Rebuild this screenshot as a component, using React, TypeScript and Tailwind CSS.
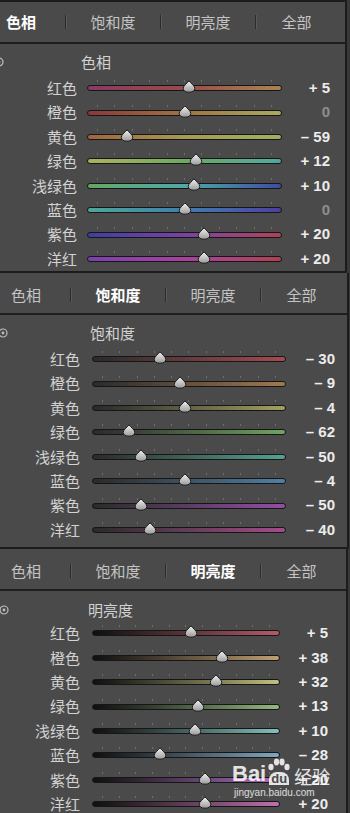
import React from "react";

type Row = { label: string; value: number; track: string };

interface PanelProps {
  active: number;
  title: string;
  rows: Row[];
  panelClass: string;
  tabsClass: string;
  headerClass: string;
  iconClass: string;
  labelClass: string;
  trackClass: string;
  valueClass: string;
}

const tabs = ["色相", "饱和度", "明亮度", "全部"];

const Thumb = () => (
  <svg width="14" height="13" viewBox="0 0 14 13" className="block">
    <defs>
      <linearGradient id="thumbFill" x1="0" y1="0" x2="0" y2="1">
        <stop offset="0" stopColor="#f2f2f2" />
        <stop offset="1" stopColor="#9a9a9a" />
      </linearGradient>
    </defs>
    <path
      d="M7 0.8 C8 2.6 12.8 5.6 12.8 8.4 C12.8 10.8 10.6 12.2 7 12.2 C3.4 12.2 1.2 10.8 1.2 8.4 C1.2 5.6 6 2.6 7 0.8Z"
      fill="url(#thumbFill)"
      stroke="#1e1e1e"
      strokeWidth="1"
    />
  </svg>
);

const TargetIcon = ({ className }: { className: string }) => (
  <svg width="10" height="10" viewBox="0 0 10 10" className={className}>
    <circle cx="5" cy="5" r="4" fill="none" stroke="#bdbdbd" strokeWidth="1.2" />
    <circle cx="5" cy="5" r="1.4" fill="#bdbdbd" />
  </svg>
);

const formatValue = (v: number) => {
  if (v === 0) return "0";
  return `${v > 0 ? "+" : "–"} ${Math.abs(v)}`;
};

const Slider = ({ row, trackClass }: { row: Row; trackClass: string }) => {
  const pct = 50 + row.value / 2;
  return (
    <div className={`relative ${trackClass}`}>
      <div className="absolute -top-[5px] left-0 right-0 flex justify-between px-[10px]">
        {Array.from({ length: 11 }).map((_, i) => (
          <span key={i} className="block w-px h-[2px] bg-[#6e6e6e]" />
        ))}
      </div>
      <div
        className={`h-[6px] rounded-full border border-[#161616] ${row.track}`}
      />
      <div
        className="absolute -top-[5px] -translate-x-1/2"
        style={{ left: `${pct}%` }}
      >
        <Thumb />
      </div>
    </div>
  );
};

const Panel = ({
  active,
  title,
  rows,
  panelClass,
  tabsClass,
  headerClass,
  iconClass,
  labelClass,
  trackClass,
  valueClass,
}: PanelProps) => {
  return (
    <section className={`bg-[#4a4a4a] border-r-2 border-[#1c1c1c] ${panelClass}`}>
      <div
        className={`flex items-center border-b-2 border-[#1e1e1e] text-[15px] ${tabsClass}`}
      >
        {tabs.map((t, i) => (
          <React.Fragment key={t}>
            {i > 0 && (
              <span className="block w-px h-[14px] bg-[#2c2c2c] shadow-[1px_0_0_#5a5a5a]" />
            )}
            <span
              className={`text-center ${
                i === 0
                  ? "w-[32px] mr-[28px]"
                  : i === 3
                    ? "w-[31px] ml-[25px]"
                    : "w-[46px] mx-[24px]"
              } ${
                i === active
                  ? "text-white font-bold"
                  : "text-[#c4c4c4]"
              }`}
            >
              {t}
            </span>
          </React.Fragment>
        ))}
      </div>
      <div className={`flex items-center text-[15px] text-[#d2d2d2] ${headerClass}`}>
        <TargetIcon className={iconClass} />
        <span>{title}</span>
      </div>
      {rows.map((r) => (
        <div key={r.label} className="flex items-center h-[24.4px]">
          <span className={`text-right text-[15px] text-[#d2d2d2] ${labelClass}`}>
            {r.label}
          </span>
          <Slider row={r} trackClass={trackClass} />
          <span
            className={`text-right text-[15px] font-semibold font-['Liberation_Sans',sans-serif] ${valueClass} ${
              r.value === 0 ? "text-[#8e8e8e]" : "text-[#ececec]"
            }`}
          >
            {formatValue(r.value)}
          </span>
        </div>
      ))}
    </section>
  );
};

const hueRows: Row[] = [
  { label: "红色", value: 5, track: "bg-linear-to-r from-[#8a3a62] via-[#9a4a48] to-[#a88452]" },
  { label: "橙色", value: 0, track: "bg-linear-to-r from-[#8a3838] via-[#a07244] to-[#a8aa60]" },
  { label: "黄色", value: -59, track: "bg-linear-to-r from-[#a0643e] via-[#a69a54] to-[#9eb260]" },
  { label: "绿色", value: 12, track: "bg-linear-to-r from-[#aab25e] via-[#6eaa5e] to-[#4ea8a0]" },
  { label: "浅绿色", value: 10, track: "bg-linear-to-r from-[#62a862] via-[#4ea8a8] to-[#3e4c9e]" },
  { label: "蓝色", value: 0, track: "bg-linear-to-r from-[#4ea896] via-[#407eae] to-[#4a3ea0]" },
  { label: "紫色", value: 20, track: "bg-linear-to-r from-[#3e3ea2] via-[#7a40a4] to-[#b04058]" },
  { label: "洋红", value: 20, track: "bg-linear-to-r from-[#7a40b0] via-[#a8409e] to-[#b04052]" },
];

const satRows: Row[] = [
  { label: "红色", value: -30, track: "bg-linear-to-r from-[#2a2a2a] to-[#a44a52]" },
  { label: "橙色", value: -9, track: "bg-linear-to-r from-[#2a2a2a] to-[#a4784e]" },
  { label: "黄色", value: -4, track: "bg-linear-to-r from-[#2a2a2a] to-[#a4a05e]" },
  { label: "绿色", value: -62, track: "bg-linear-to-r from-[#2a2a2a] to-[#70a45e]" },
  { label: "浅绿色", value: -50, track: "bg-linear-to-r from-[#2a2a2a] to-[#52a492]" },
  { label: "蓝色", value: -4, track: "bg-linear-to-r from-[#2a2a2a] to-[#4e80a6]" },
  { label: "紫色", value: -50, track: "bg-linear-to-r from-[#2a2a2a] to-[#944ca8]" },
  { label: "洋红", value: -40, track: "bg-linear-to-r from-[#2a2a2a] to-[#a44c8a]" },
];

const lumRows: Row[] = [
  { label: "红色", value: 5, track: "bg-linear-to-r from-[#101010] to-[#b45a6a]" },
  { label: "橙色", value: 38, track: "bg-linear-to-r from-[#101010] to-[#c0a072]" },
  { label: "黄色", value: 32, track: "bg-linear-to-r from-[#101010] to-[#c2c07e]" },
  { label: "绿色", value: 13, track: "bg-linear-to-r from-[#101010] to-[#92ba7e]" },
  { label: "浅绿色", value: 10, track: "bg-linear-to-r from-[#101010] to-[#82c0bc]" },
  { label: "蓝色", value: -28, track: "bg-linear-to-r from-[#101010] to-[#80a8c2]" },
  { label: "紫色", value: 20, track: "bg-linear-to-r from-[#101010] to-[#b070c2]" },
  { label: "洋红", value: 20, track: "bg-linear-to-r from-[#101010] to-[#c070ae]" },
];

const Watermark = () => (
  <div className="absolute left-[232px] top-[758px] text-white/85 pointer-events-none">
    <div className="flex items-end">
      <span className="text-[22px] leading-none font-bold font-['Liberation_Sans',sans-serif]">
        Bai
      </span>
      <span className="relative flex flex-col items-center w-[26px]">
        <svg width="24" height="14" viewBox="0 0 24 14" className="block">
          <ellipse cx="4" cy="9" rx="2.6" ry="3.2" fill="currentColor" />
          <ellipse cx="9.5" cy="4" rx="2.6" ry="3.4" fill="currentColor" />
          <ellipse cx="15" cy="4" rx="2.6" ry="3.4" fill="currentColor" />
          <ellipse cx="20" cy="9" rx="2.6" ry="3.2" fill="currentColor" />
        </svg>
        <span className="text-[13px] leading-none font-bold font-['Liberation_Sans',sans-serif] bg-white/85 text-[#4a4a4a] rounded-t-[8px] px-[2px]">
          du
        </span>
      </span>
      <span className="text-[18px] leading-none ml-[2px]">经验</span>
    </div>
    <div className="text-[10px] leading-none mt-[3px] ml-[2px] font-['Liberation_Sans',sans-serif] text-white/80">
      jingyan.baidu.com
    </div>
  </div>
);

export default function App() {
  return (
    <div className="relative w-[350px] h-[813px] overflow-hidden bg-[#383838] font-['Noto_Sans_CJK_SC',sans-serif]">
      <Panel
        active={0}
        title="色相"
        rows={hueRows}
        panelClass="w-[347px] border-t-2 border-b-2"
        tabsClass="h-[42px] pl-[5px]"
        headerClass="h-[32px] pt-[4px]"
        iconClass="-ml-[6px] mr-[77px]"
        labelClass="w-[77px]"
        trackClass="ml-[10px] w-[195px]"
        valueClass="w-[48px]"
      />
      <Panel
        active={1}
        title="饱和度"
        rows={satRows}
        panelClass="w-[349px] border-b-2 pb-[5px]"
        tabsClass="h-[42px] pt-[4px] pl-[10px]"
        headerClass="h-[32px] pt-[4px]"
        iconClass="-ml-[2px] mr-[82px]"
        labelClass="w-[80px]"
        trackClass="ml-[12px] w-[194px]"
        valueClass="w-[49px]"
      />
      <Panel
        active={2}
        title="明亮度"
        rows={lumRows}
        panelClass="w-[348px]"
        tabsClass="h-[42px] pt-[3px] pl-[10px]"
        headerClass="h-[30px] pt-[8px]"
        iconClass="-ml-[1px] mr-[79px]"
        labelClass="w-[80px]"
        trackClass="ml-[12px] w-[188px]"
        valueClass="w-[48px]"
      />
      <Watermark />
    </div>
  );
}
